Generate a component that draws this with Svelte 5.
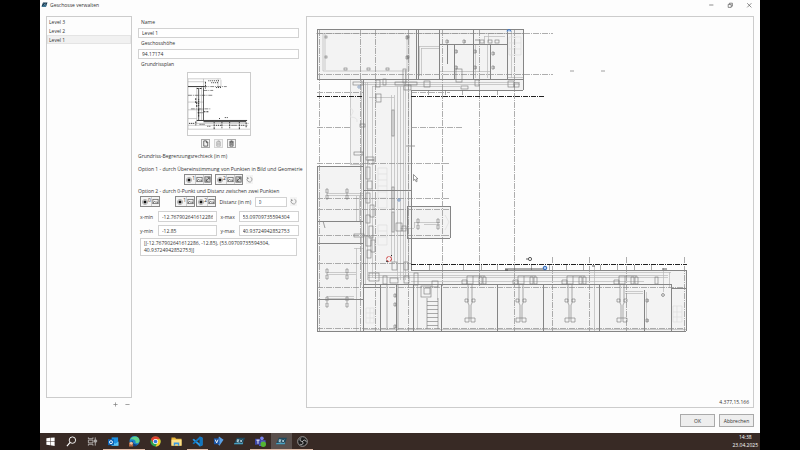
<script lang="ts">
  interface Level {
    id: number;
    name: string;
    height: string;
  }

  type Box = [number, number, number, number];

  let levels: Level[] = [
    { id: 3, name: "Level 3", height: "101.4" },
    { id: 2, name: "Level 2", height: "97.8" },
    { id: 1, name: "Level 1", height: "94.17174" }
  ];
  let activeId = 1;
  let picked = "";
  let distance = "0";
  let bounds = {
    xmin: "-12.767902641612286",
    xmax: "53.09709735594304",
    ymin: "-12.85",
    ymax: "40.93724942852753"
  };

  $: active = levels.find((l) => l.id === activeId) ?? levels[0];
  $: summary = `[(${bounds.xmin}, ${bounds.ymin}), (${bounds.xmax}, ${bounds.ymax})]`;

  function addLevel(): void {
    const id = Math.max(...levels.map((l) => l.id)) + 1;
    levels = [{ id, name: `Level ${id}`, height: "0" }, ...levels];
    activeId = id;
  }

  function removeLevel(): void {
    if (levels.length < 2) return;
    levels = levels.filter((l) => l.id !== activeId);
    activeId = levels[0].id;
  }

  // plan geometry: [x, y, width, height]
  const floors: Box[] = [
    [317, 29, 206, 50],
    [350, 80, 61, 205],
    [363, 79, 160, 11],
    [317, 166, 46, 165],
    [407, 206, 43, 32],
    [363, 270, 323, 61]
  ];

  // [x1, y1, x2, y2]
  const walls: Box[] = [
    [317, 29, 523, 29], [317, 29, 317, 79], [317, 79, 523, 79], [523, 29, 523, 90],
    [411, 90, 523, 90], [416, 29, 416, 79], [418, 29, 418, 79], [439, 30, 439, 79],
    [473, 30, 473, 79], [454, 44, 454, 79], [490, 44, 490, 79], [507, 30, 507, 79],
    [439, 44, 507, 44], [447, 44, 447, 64], [363, 79, 363, 331], [411, 90, 411, 270],
    [317, 166, 363, 166], [317, 166, 317, 331], [317, 221, 363, 221], [317, 243, 363, 243],
    [317, 299, 363, 299], [407, 206, 450, 206], [450, 206, 450, 238], [407, 238, 450, 238],
    [407, 206, 407, 238], [411, 270, 686, 270], [363, 284, 671, 284], [317, 331, 686, 331],
    [363, 287, 380, 287], [380, 284, 380, 331], [396, 284, 396, 331], [413, 284, 413, 331],
    [441, 284, 441, 331], [497, 284, 497, 331], [543, 284, 543, 331], [599, 284, 599, 331],
    [644, 290, 644, 331], [671, 284, 671, 331], [686, 270, 686, 331], [363, 190, 411, 190],
    [671, 288, 686, 288]
  ];

  const thin: Box[] = [
    [350, 80, 350, 164], [350, 164, 363, 164], [361, 80, 361, 285], [365, 82, 365, 285],
    [367, 82, 367, 280], [372, 86, 372, 278], [391, 95, 391, 262], [394, 95, 394, 262],
    [397, 86, 397, 280], [400, 86, 400, 280], [403, 86, 403, 280], [405, 70, 405, 280],
    [408, 82, 408, 276], [363, 82, 520, 82], [363, 84, 520, 84], [372, 86, 460, 86],
    [369, 97, 394, 97], [368, 272, 671, 272], [368, 275, 668, 275], [368, 277, 668, 277],
    [411, 281, 644, 281], [419, 46, 439, 46], [419, 46, 419, 76], [421, 48, 439, 48],
    [421, 48, 421, 76], [439, 71, 490, 71], [484, 36, 505, 36], [484, 36, 484, 44],
    [488, 33, 488, 42], [488, 33, 503, 33], [511, 31, 511, 78], [507, 77, 523, 77],
    [475, 44, 475, 78], [487, 44, 487, 78], [356, 196, 356, 221], [359, 196, 359, 221],
    [356, 248, 356, 285], [354, 248, 363, 248], [327, 195, 363, 195], [327, 193, 363, 193],
    [327, 272, 356, 272], [327, 274, 356, 274], [327, 296, 354, 296], [327, 298, 354, 298],
    [356, 279, 356, 331], [316, 33, 523, 33], [363, 329, 686, 329], [625, 291, 643, 291],
    [625, 293, 643, 293], [646, 292, 646, 322], [663, 268, 663, 292], [594, 266, 594, 331],
    [424, 222, 440, 222], [424, 224, 440, 224], [414, 222, 424, 222], [414, 222, 414, 228],
    [400, 228, 414, 228], [417, 285, 417, 330], [437, 284, 437, 300], [669, 272, 669, 288]
  ];

  const axes: Box[] = [
    [317, 33, 553, 33], [317, 74, 553, 74], [317, 92, 363, 92], [411, 92, 450, 92],
    [317, 127, 350, 127], [411, 127, 462, 127], [317, 163, 450, 163], [317, 198, 450, 198],
    [317, 209, 450, 209], [317, 235, 450, 235], [317, 263, 411, 263], [317, 287, 686, 287],
    [317, 328, 686, 328], [319, 30, 319, 331], [360, 30, 360, 331], [375, 30, 375, 331],
    [408, 30, 408, 331], [442, 30, 442, 286], [479, 30, 479, 286], [514, 30, 514, 331],
    [552, 257, 552, 331], [589, 257, 589, 331], [626, 257, 626, 331], [684, 257, 684, 331]
  ];

  const heavyAxes: Box[] = [
    [317, 96, 363, 96],
    [411, 96, 545, 96],
    [411, 264, 687, 264]
  ];

  const fittings: Box[] = [
    [325, 36, 2, 2], [325, 56, 2, 2], [407, 36, 2, 2], [407, 56, 2, 2],
    [353, 82, 10, 3], [376, 80, 4, 7], [383, 79, 3, 6], [376, 94, 5, 8], [403, 69, 3, 14],
    [395, 82, 22, 3], [404, 85, 7, 5], [424, 81, 6, 6], [456, 69, 6, 13], [461, 86, 7, 3],
    [475, 80, 4, 6], [508, 81, 6, 6], [514, 83, 5, 4], [480, 40, 4, 3], [488, 40, 4, 3],
    [495, 40, 4, 3], [360, 124, 5, 3], [354, 152, 9, 3], [366, 157, 8, 3], [368, 160, 6, 4],
    [366, 167, 4, 12], [367, 181, 5, 8], [366, 193, 4, 10], [370, 205, 4, 12], [366, 215, 4, 8],
    [369, 226, 4, 12], [366, 236, 5, 10], [371, 240, 4, 12], [367, 250, 4, 8], [354, 234, 10, 3],
    [392, 110, 2, 26], [392, 187, 2, 22], [392, 212, 2, 20], [396, 223, 6, 8], [402, 226, 4, 5],
    [392, 262, 5, 8], [404, 262, 4, 8], [383, 276, 4, 8], [390, 278, 8, 5], [404, 276, 5, 7],
    [414, 273, 4, 12], [421, 286, 10, 11], [424, 288, 6, 6], [432, 281, 6, 6], [369, 273, 10, 8],
    [655, 277, 3, 7], [386, 68, 3, 2], [367, 68, 3, 2], [344, 68, 3, 2]
  ];

  const units = [470, 521, 570, 622];
  const crosses: Array<[number, number]> = [
    [327, 189], [347, 189], [327, 269], [347, 269], [327, 297], [347, 297], [418, 219], [438, 219]
  ];
  const sockets: Array<[number, number]> = [
    [395, 294], [395, 303], [395, 325], [456, 50], [456, 66], [475, 50], [475, 66], [493, 52],
    [493, 66], [447, 40], [464, 40], [407, 36], [407, 56], [647, 299], [647, 319]
  ];
  const steps = [301, 305, 309, 313, 317, 321, 325];
  const ticks = [429, 463, 481, 497, 531, 549, 566, 583, 600, 617, 634, 651];
  const roomTicks = [428, 445, 462, 479, 497];

  const pinned = ["start", "search", "tasks", "outlook", "edge", "chrome", "files", "code", "visio", "rx", "teams", "rx-open", "obs"];
  const running = ["outlook", "edge", "code", "teams", "rx-open", "obs"];
</script>

{#snippet imageIcon()}
  <svg class="glyph" viewBox="0 0 8 8" aria-hidden="true">
    <rect x="1" y="1.5" width="6" height="5" fill="none" stroke="#555" stroke-width=".8" />
    <path d="M1 6 3 3.6 4.6 5.2 5.6 4.2 7 6" fill="none" stroke="#555" stroke-width=".8" />
  </svg>
{/snippet}

{#snippet geometryIcon()}
  <svg class="glyph" viewBox="0 0 8 8" aria-hidden="true">
    <rect x="1" y="1" width="6" height="6" fill="#ddd" stroke="#555" stroke-width=".9" />
    <path d="M2 6 6 2M4 2h2v2M2.5 3v3H5" fill="none" stroke="#444" stroke-width=".8" />
  </svg>
{/snippet}

{#snippet resetButton(label: string)}
  <button type="button" class="reset" aria-label={label}>
    <svg class="glyph" viewBox="0 0 8 8"><path d="M2.2 2A2.8 2.8 0 1 0 5 1.4M1.6 1.2v1.6h1.6" fill="none" stroke="#888" stroke-width=".8" /></svg>
  </button>
{/snippet}

{#snippet picker(group: string, index: number, geometry: boolean)}
  <div class="picker">
    <label>
      <input type="radio" name="pick" value={`${group}-${index}`} bind:group={picked} />
      <span>{index}</span>
    </label>
    <button type="button" aria-label="Punkt im Bild">{@render imageIcon()}</button>
    {#if geometry}
      <button type="button" aria-label="Punkt in der Geometrie">{@render geometryIcon()}</button>
    {/if}
  </div>
{/snippet}

<div class="screen">
  <main class="window">
    <header class="titlebar">
      <svg class="logo" viewBox="0 0 14 12" aria-hidden="true">
        <path d="M4 1h9l-3 8H1z" fill="#17384f" />
        <path d="M1 9.5h9l1-3-7 .5z" fill="#286c91" />
        <path d="m5 3 5 4M10 3 5 7" stroke="#8fb9cf" />
      </svg>
      <h1>Geschosse verwalten</h1>
      <div class="controls">
        <button type="button" aria-label="Minimieren"><svg viewBox="0 0 10 10"><path d="M2 5h7" /></svg></button>
        <button type="button" aria-label="Wiederherstellen"><svg viewBox="0 0 10 10"><path d="M2 4h5v5H2zM4 4V2h5v5H7" /></svg></button>
        <button type="button" aria-label="Schließen"><svg viewBox="0 0 10 10"><path d="m2 2 7 7M9 2 2 9" /></svg></button>
      </div>
    </header>

    <div class="body">
      <section class="levels">
        <ul>
          {#each levels as level (level.id)}
            <li>
              <button type="button" class:active={level.id === activeId} on:click={() => (activeId = level.id)}>{level.name}</button>
            </li>
          {/each}
        </ul>
        <div class="level-tools">
          <button type="button" aria-label="Geschoss hinzufügen" on:click={addLevel}>
            <svg viewBox="0 0 6 6"><path d="M3 .5v5M.5 3h5" /></svg>
          </button>
          <button type="button" aria-label="Geschoss entfernen" on:click={removeLevel}>
            <svg viewBox="0 0 6 6"><path d="M.5 3h5" /></svg>
          </button>
        </div>
      </section>

      <form on:submit|preventDefault>
        <label class="caption" for="name">Name</label>
        <input id="name" type="text" bind:value={active.name} />
        <label class="caption" for="height">Geschosshöhe</label>
        <input id="height" type="text" bind:value={active.height} />
        <div class="caption">Grundrissplan</div>

        <svg class="thumb" viewBox="0 0 64 64" role="img" aria-label="Vorschau Grundrissplan">
          <g fill="none" stroke="#999" stroke-width=".5">
            <path d="M0 6h34M0 6v52h64M0 30h16M0 38h16M0 47h9M9 15v38M14 14v35M1 52h62M0 54h62M16 6v9M31 6v9M34 7v7M0 9h17" />
          </g>
          <g fill="none" stroke="#333">
            <path d="M0 14h17M9 49h52" />
            <path d="M16 14h24M0 23h26M3 37h21M16 18h10" stroke-dasharray="4 1 1 1" stroke-width=".6" />
            <path d="M16 15v34M11 16v33" stroke-width=".8" />
            <path d="M9 16h6M18 9v7M8 26v6M9 30v6M11 37v8M16 40h6M8 50v4M27 50v8M35 50v7M43 50v7M53 50v8M60 51v6" stroke-dasharray="2 1" />
            <path d="M21 8h11M24 10h8M29 15h6M32 47h2M38 46h3M10 41h5M11 27v8" stroke-dasharray="1 1" />
            <path d="M16 50h44" stroke-width="1.6" stroke="#555" />
            <path d="M1 52h5M12 53h5M20 55h4M29 54h5M45 54h5M55 54h4" stroke-dasharray="1 1" />
          </g>
        </svg>

        <div class="file-tools">
          <button type="button" aria-label="Plan laden"><svg viewBox="0 0 8 8"><path d="M2 1h3l1.5 1.5V7H2zM5 1v2h1.5" /></svg></button>
          <button type="button" class="muted" aria-label="Plan einfügen"><svg viewBox="0 0 8 8"><path d="M2 2h4v5H2zM3 1h2v1M3.3 3v3M4.7 3v3" /></svg></button>
          <button type="button" aria-label="Plan löschen"><svg viewBox="0 0 8 8"><path d="M1.5 2h5M3 1h2M2.2 2.5h3.6V7H2.2zM3.4 3.5V6M4.6 3.5V6" /></svg></button>
        </div>

        <div class="line group-title">Grundriss-Begrenzungsrechteck (in m)</div>

        <div class="line">Option 1 - durch Übereinstimmung von Punkten in Bild und Geometrie</div>
        <div class="row centered">
          {@render picker("match", 1, true)}
          {@render picker("match", 2, true)}
          {@render resetButton("Option 1 zurücksetzen")}
        </div>

        <div class="line">Option 2 - durch 0-Punkt und Distanz zwischen zwei Punkten</div>
        <div class="row spread">
          {@render picker("distance", 0, false)}
          <div class="pair">
            {@render picker("distance", 1, false)}
            {@render picker("distance", 2, false)}
          </div>
          <label for="distance">Distanz (in m)</label>
          <input id="distance" type="text" bind:value={distance} />
          {@render resetButton("Option 2 zurücksetzen")}
        </div>

        <div class="bounds">
          <label for="xmin">x-min</label>
          <input id="xmin" type="text" bind:value={bounds.xmin} />
          <label for="xmax">x-max</label>
          <input id="xmax" type="text" bind:value={bounds.xmax} />
          <label for="ymin">y-min</label>
          <input id="ymin" type="text" bind:value={bounds.ymin} />
          <label for="ymax">y-max</label>
          <input id="ymax" type="text" bind:value={bounds.ymax} />
        </div>
        <textarea rows="2" readonly aria-label="Begrenzungsrechteck" value={summary}></textarea>
      </form>

      <section class="canvas">
        <svg class="plan" viewBox="307 17 446 376" preserveAspectRatio="xMinYMin meet" role="img" aria-label="Grundriss">
          {#each floors as [x, y, width, height]}
            <rect {x} {y} {width} {height} fill="#f3f3f3" />
          {/each}
          <g class="thin">
            {#each thin as [x1, y1, x2, y2]}
              <line {x1} {y1} {x2} {y2} />
            {/each}
            <path d="M323 34v37h86V35M325 34v36M407 35v35" />
            <path d="M378 168h9v18h-9zM378 186v22h9v-22M378 174h9M378 180h9M378 192h9M378 198h9M378 225h9v20h-9zM378 231h9M378 237h9" class="faint" />
            <path d="M366 308h8v15h-8zM370 308v15M366 313h8M366 318h8M673 306h9v16h-9zM677 306v16M673 312h9M673 317h9M509 37h12v18h-12zM515 37v18M509 43h12M509 49h12M350 108q6 2 0 9q8 0 7 5M445 215l4 7-4 8" class="faint" />
          </g>
          <g class="walls">
            {#each walls as [x1, y1, x2, y2]}
              <line {x1} {y1} {x2} {y2} />
            {/each}
          </g>
          <g class="axes">
            {#each axes as [x1, y1, x2, y2]}
              <line {x1} {y1} {x2} {y2} />
            {/each}
          </g>
          <g class="heavy">
            {#each heavyAxes as [x1, y1, x2, y2]}
              <line {x1} {y1} {x2} {y2} />
            {/each}
          </g>
          <g class="fittings">
            {#each fittings as [x, y, width, height]}
              <rect {x} {y} {width} {height} />
            {/each}
            {#each crosses as [x, y]}
              <path d={`M${x - 1} ${y}h2v4h-2zM${x - 1} ${y + 6}h2v4h-2z`} />
            {/each}
            {#each sockets as [x, y]}
              <path d={`M${x - 1} ${y}h2v3h-2zM${x + 1} ${y}v3`} />
            {/each}
            {#each units as x}
              <path
                d={`M${x - 3} 276h6v8h-6zM${x - 8} 280h5v4h-5zM${x + 3} 276h12M${x + 9} 277h3v7h-3zM${x + 13} 277h3v7h-3z
                  M${x - 2} 284v19l1 2v13h2v-13l1-2v-19M${x - 5} 299h3v3h-3zM${x + 2} 299h3v3h-3zM${x - 5} 318h4v4h-4zM${x + 1} 318h4v4h-4z`}
              />
            {/each}
            {#each steps as y}
              <line x1="427" y1={y} x2="438" y2={y} />
            {/each}
            {#each ticks as x}
              <line x1={x} y1="265" x2={x} y2="270" />
            {/each}
            {#each roomTicks as x}
              <line x1={x} y1="90" x2={x} y2="95" />
            {/each}
            <path d="M427 298v31M438 298v31M387 284v46M398 284v46" />
          </g>
          <g fill="none" stroke="#333" stroke-width=".8">
            <path d="M505 269h40M505 270h3M592 266h3M662 269h5" />
            <path d="M406 146h9M570 71h4M601 71h4M323 221l2 7M475 40h5" stroke="#888" />
            <circle cx="530" cy="259" r="1.6" />
            <path d="M527 258v2" />
            <circle cx="663" cy="295" r="1.4" stroke="#777" />
          </g>
          <circle cx="389" cy="259" r="2.5" fill="none" stroke="#c33" stroke-dasharray="3 1" />
          <path d="m386 261 2 1M391 256l1-1" stroke="#222" />
          <circle cx="545" cy="268" r="1.8" fill="#a9c9f2" stroke="#2c66b8" />
          <path d="M507 31.500a2 2 0 0 1 4 0" fill="#a9c9f2" stroke="#2c66b8" stroke-width=".8" />
          <circle cx="399" cy="200" r="1.2" fill="none" stroke="#6d8fbd" />
          <circle cx="359" cy="87" r="1.2" fill="none" stroke="#8fa5c4" />
          <path d="M413.500 174.500v6l1.500-1.200 1.200 2.500 1-.5-1-2.400h1.800z" fill="#fff" stroke="#555" stroke-width=".6" />
        </svg>
        <output>4.377,15.166</output>
      </section>
    </div>

    <footer>
      <button type="button">OK</button>
      <button type="button">Abbrechen</button>
    </footer>
  </main>

  <nav class="taskbar" aria-label="Taskleiste">
    {#each pinned as app}
      <button type="button" class:running={running.includes(app)} class:focused={app === "rx-open"} aria-label={app}>
        <svg viewBox="0 0 24 24">
          {#if app === "start"}
            <path d="m3 5 8-1v8H3zM12 4l9-1v9h-9zM3 13h8v7l-8-1zM12 13h9v9l-9-2z" fill="#fff" />
          {:else if app === "search"}
            <circle cx="14" cy="9" r="7" fill="none" stroke="#fff" stroke-width="2" />
            <path d="m9 14-7 8" stroke="#fff" stroke-width="2.500" />
          {:else if app === "tasks"}
            <path d="M3 3v3h10V3M3 21v-3h10v3M3 9h10v6H3zM18 3v18M16 9h5v4h-5z" fill="none" stroke="#ddd" stroke-width="1.500" />
          {:else if app === "outlook"}
            <path d="M8 3h14v18H8z" fill="#1b8fe0" />
            <path d="m8 12 8 5 7-5v9H8z" fill="#5cc5f5" />
            <rect y="7" width="13" height="13" fill="#0b62b4" />
            <circle cx="6.500" cy="13.500" r="3.300" fill="none" stroke="#fff" stroke-width="2" />
          {:else if app === "edge"}
            <circle cx="12" cy="11" r="11" fill="#1b82ca" />
            <path d="M2 8C8-3 24 0 23 11c0 5-7 6-9 3 2-4-4-9-12-6z" fill="#5fd18c" />
            <path d="M8 11c0 6 6 9 12 7l-6 5C4 23 3 12 8 11z" fill="#123f7c" />
            <path d="M0 14h9v9H0z" fill="#b46a45" />
            <circle cx="5" cy="16" r="3" fill="#e8c2a0" />
          {:else if app === "chrome"}
            <circle cx="12" cy="12" r="11" fill="#2da44e" />
            <path d="M2 7a11 11 0 0 1 20 0l-10 2-5 6z" fill="#e0402f" />
            <path d="M22 7a11 11 0 0 1-10 16l5-10-3-6z" fill="#f7c92e" />
            <circle cx="12" cy="12" r="5.500" fill="#fff" />
            <circle cx="12" cy="12" r="4" fill="#3478e0" />
          {:else if app === "files"}
            <path d="M1 3h8l2 3h12v15H1z" fill="#e9b437" />
            <path d="M1 8h22v13H1z" fill="#fce08a" />
            <path d="M6 14h12v7h-3v-3H9v3H6z" fill="#3b9ae0" />
          {:else if app === "code"}
            <path d="m17 1 6 3v16l-6 3L1 8l3-2 13 11z" fill="#2b9be8" />
            <path d="m17 1 6 3v16l-6 3V7L4 18l-3-2z" fill="#1275bd" />
          {:else if app === "visio"}
            <path d="m13 1 10 7-9 13-5-6z" fill="#5aa0e6" />
            <path d="M2 5h12v13H2z" fill="#1c55a5" />
            <path d="m5 8 3 7 3-7" fill="none" stroke="#fff" stroke-width="2" />
          {:else if app === "teams"}
            <circle cx="15" cy="5" r="4" fill="#7b83eb" />
            <path d="M9 9h14v8l-5 5H9z" fill="#5059c9" />
            <path d="M0 6h13v13H0z" fill="#3d46a8" />
            <path d="M3 9h7M6.500 9v8" stroke="#fff" stroke-width="2" />
            <circle cx="18" cy="18" r="6" fill="#55b533" />
          {:else if app === "obs"}
            <circle cx="12" cy="12" r="10.500" fill="#1c1c1c" stroke="#ccc" stroke-width="1.500" />
            <path d="M12 12c-6 0-7-5-3-7M12 12c3-5 8-3 8 1M12 12c3 5-1 8-5 6" fill="none" stroke="#ccc" stroke-width="2" />
          {:else}
            <path d="M6 4h18l-5 14H0z" fill="#1f4a5e" />
            <path d="M0 18h19l1-3H1z" fill="#49a0c0" />
            <path d="M7 14V8h3v3H7l4 3M13 8l5 6M18 8l-5 6" fill="none" stroke="#d9eef6" stroke-width="1.500" />
          {/if}
        </svg>
      </button>
    {/each}
    <div class="clock">
      <time>14:38</time>
      <time>23.04.2025</time>
    </div>
  </nav>
</div>

<style>
  :global(body) {
    margin: 0;
    background: #000;
  }

  .screen {
    min-height: 100vh;
    padding: 0 5%;
    box-sizing: border-box;
    display: flex;
    flex-direction: column;
    background: #000;
    color: #333;
    font: 5px/8px "Open Sans", "Noto Sans", sans-serif;
  }

  button,
  input,
  textarea {
    font: inherit;
    color: inherit;
    box-sizing: border-box;
    margin: 0;
    padding: 0;
    border: 0;
    border-radius: 0;
    background: none;
    min-width: 0;
  }

  svg {
    display: block;
  }

  .window {
    flex: 1;
    display: flex;
    flex-direction: column;
    padding: 0 6px 6px;
    background: #fdfdfd;
  }

  .titlebar {
    display: flex;
    align-items: center;
    height: 10px;
    margin-bottom: 6px;
  }

  .logo {
    width: 7px;
    height: 6px;
    margin: 0 2px 0 -5px;
  }

  h1 {
    margin: 0;
    font: inherit;
  }

  .controls {
    display: flex;
    gap: 13px;
    margin-left: auto;
    padding-right: 2px;
  }

  .controls svg {
    width: 6px;
    height: 6px;
    fill: none;
    stroke: #444;
  }

  .body {
    flex: 1;
    display: grid;
    grid-template-columns: minmax(0, 86fr) minmax(0, 162fr) minmax(0, 448fr);
    gap: 6px;
  }

  .levels {
    display: flex;
    flex-direction: column;
  }

  ul {
    flex: 1;
    margin: 0;
    padding: 0;
    border: 1px solid #ccc;
    list-style: none;
  }

  li button {
    display: block;
    width: 100%;
    height: 9px;
    padding-left: 2px;
    line-height: 8px;
    text-align: left;
  }

  li .active {
    background: #f1f1f1;
    box-shadow: inset 0 0 0 1px #e4e4e4;
  }

  .level-tools {
    display: flex;
    justify-content: flex-end;
    gap: 7px;
    height: 7px;
    padding: 3px 2px 0;
  }

  .level-tools svg {
    width: 5px;
    height: 5px;
    stroke: #777;
    stroke-width: .8;
  }

  form {
    display: flex;
    flex-direction: column;
    padding: 1px 1px 0 0;
  }

  .caption {
    line-height: 11px;
    padding-left: 3px;
  }

  input[type="text"],
  textarea {
    height: 10px;
    padding: 0 3px;
    border: 1px solid #d2d2d2;
    background: #fff;
  }

  .thumb {
    align-self: center;
    width: 64px;
    height: 64px;
    margin-top: 2px;
    border: 1px solid #ccc;
    box-sizing: border-box;
    background: #fff;
  }

  .file-tools {
    display: flex;
    justify-content: center;
    gap: 4px;
    margin: 3px 0;
  }

  .file-tools button {
    width: 9px;
    height: 9px;
    border: 1px solid #aaa;
    background: #f3f3f3;
  }

  .file-tools svg {
    width: 7px;
    height: 7px;
    fill: none;
    stroke: #333;
    stroke-width: .8;
  }

  .file-tools .muted {
    border-color: #d5d5d5;
  }

  .muted svg {
    stroke: #999;
  }

  .line {
    line-height: 10px;
    white-space: nowrap;
  }

  .group-title {
    margin-bottom: 3px;
  }

  .row {
    display: flex;
    align-items: center;
    height: 11px;
    margin-bottom: 1px;
  }

  .centered {
    justify-content: center;
    gap: 3px;
  }

  .spread {
    justify-content: space-between;
    padding: 0 2px;
    white-space: nowrap;
  }

  .spread > input {
    width: 32px;
  }

  .pair {
    display: flex;
    gap: 1px;
    margin-left: 12px;
  }

  .picker {
    display: flex;
    flex: none;
    align-items: center;
    height: 11px;
    box-sizing: border-box;
    border: 1px solid #888;
    background: #f5f5f5;
  }

  .picker label {
    display: flex;
    align-items: center;
    padding-left: 1px;
  }

  .picker span {
    line-height: 5px;
    padding-bottom: 3px;
  }

  .picker input {
    appearance: none;
    width: 6px;
    height: 6px;
    border: 1px solid #aaa;
    border-radius: 50%;
    background: radial-gradient(circle, #111 0 50%, #fff 60%);
  }

  .picker button {
    border-left: 1px solid #ccc;
    height: 9px;
  }

  .glyph {
    width: 7px;
    height: 7px;
  }

  .reset {
    padding: 1px 0;
    background: #f4f4f4;
  }

  .bounds {
    display: grid;
    grid-template-columns: 16px 1fr 16px 1fr;
    align-items: center;
    gap: 3px 2px;
    margin: 3px 0 2px;
    padding-left: 2px;
    white-space: nowrap;
  }

  .bounds input {
    height: 11px;
  }

  .bounds input:nth-of-type(odd) {
    margin-right: 2px;
  }

  textarea {
    height: 18px;
    margin: 0 2px;
    line-height: 7px;
    resize: none;
    overflow: hidden;
    padding: 1px 3px;
  }

  .canvas {
    display: flex;
    flex-direction: column;
    justify-content: space-between;
    border: 1px solid #ccc;
  }

  .plan {
    width: 100%;
    fill: none;
  }

  .plan line {
    shape-rendering: crispEdges;
  }

  .thin {
    stroke: #b8b8b8;
    stroke-width: .7;
  }

  .faint {
    stroke: #dedede;
  }

  .walls {
    stroke: #858585;
  }

  .axes {
    stroke: #8c8c8c;
    stroke-width: .7;
    stroke-dasharray: 6 1 1 1;
  }

  .heavy {
    stroke: #222;
    stroke-dasharray: 5 1 1 1;
  }

  .fittings {
    stroke: #777;
    stroke-width: .6;
  }

  output {
    align-self: flex-end;
    padding: 0 4px 1px 0;
  }

  footer {
    display: flex;
    justify-content: flex-end;
    gap: 4px;
    margin-top: 6px;
  }

  footer button {
    width: 35px;
    height: 13px;
    border: 1px solid #aaa;
    background: #eee;
  }

  .taskbar {
    display: flex;
    height: 17px;
    background: #382a25;
  }

  .taskbar button {
    width: 21px;
    display: flex;
    align-items: center;
    justify-content: center;
    border-bottom: 1px solid transparent;
  }

  .taskbar svg {
    width: 11px;
    height: 11px;
  }

  .taskbar .running {
    border-color: #dcb9a5;
  }

  .taskbar .focused {
    background: #5a504d;
  }

  .clock {
    display: flex;
    flex-direction: column;
    align-items: center;
    margin-left: auto;
    padding-right: 2px;
    color: #fff;
  }
</style>
